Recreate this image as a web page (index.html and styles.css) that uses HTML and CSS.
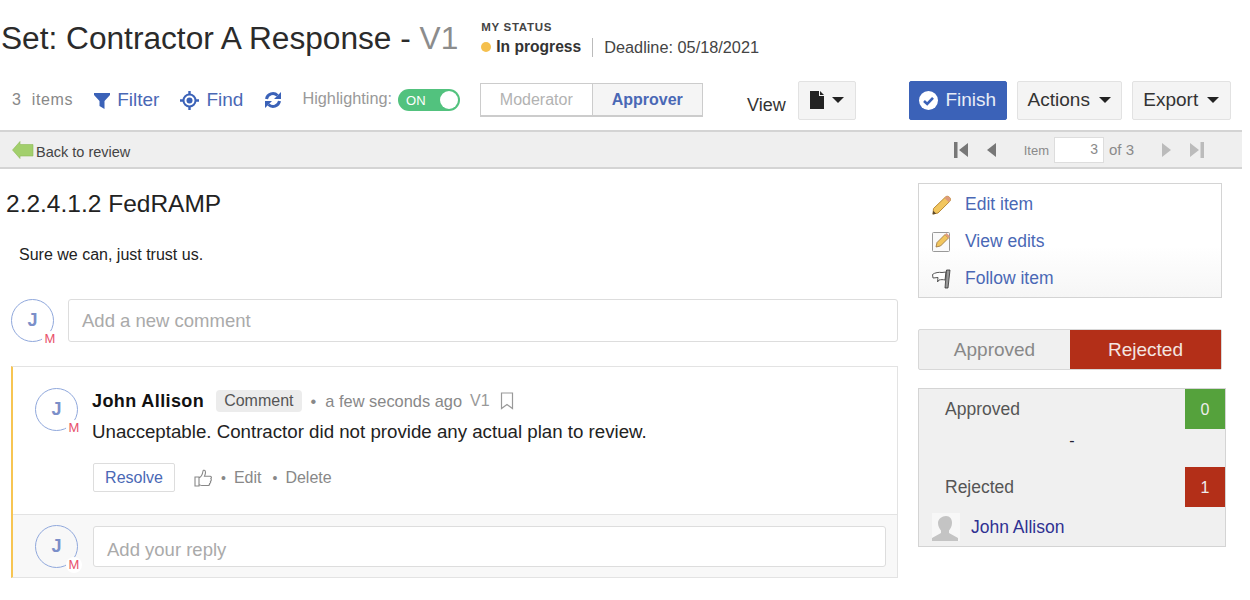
FILE: index.html
```html
<!DOCTYPE html>
<html lang="en">
<head>
<meta charset="utf-8">
<title>Set: Contractor A Response</title>
<link rel="stylesheet" href="styles.css">
</head>
<body>
<div class="page">
  <header class="head">
    <h1 class="title">Set: Contractor A Response - <span class="ver">V1</span></h1>
    <div class="status">
      <div class="status-label">MY STATUS</div>
      <div class="status-row">
        <span class="dot"></span><b class="prog">In progress</b><span class="deadline">Deadline: 05/18/2021</span>
      </div>
    </div>
  </header>
  <div class="toolbar">
    <span class="count">3&nbsp; items</span>
    <a class="tool tool-filter"><svg width="16" height="18" viewBox="0 0 16 18"><path fill="#3b62b8" d="M0 2h16v2L10.500 10V18L5.500 15v-5L0 4z"/></svg>Filter</a>
    <a class="tool tool-find"><svg width="19" height="19" viewBox="0 0 19 19"><circle cx="9.500" cy="9.500" r="6" fill="none" stroke="#3b62b8" stroke-width="2"/><circle cx="9.500" cy="9.500" r="3" fill="#3b62b8"/><path fill="#3b62b8" d="M8.300 0h2.400v4H8.300zM8.300 15h2.400v4H8.300zM0 8.300h4v2.400H0zM15 8.300h4v2.400h-4z"/></svg>Find</a>
    <a class="tool tool-sync"><svg width="18" height="18" viewBox="0 0 18 18"><path fill="none" stroke="#3b62b8" stroke-width="3" d="M2.500 8a6.500 6.500 0 0 1 11-3.500M15.500 10a6.500 6.500 0 0 1-11 3.500"/><path fill="#3b62b8" d="M17 1v7h-7zM1 17v-7h7z"/></svg></a>
    <span class="hl-label">Highlighting:</span>
    <span class="switch"><span class="switch-text">ON</span><span class="knob"></span></span>
    <div class="roles"><span class="role">Moderator</span><span class="role role-on">Approver</span></div>
    <span class="view-label">View</span>
    <button class="btn btn-view"><svg width="15" height="18" viewBox="0 0 15 18"><path fill="#222" d="M0 0h9v5h5v13H0zM10 0l4 4h-4z"/></svg><i class="caret"></i></button>
    <button class="btn btn-finish"><svg width="19" height="19" viewBox="0 0 19 19"><circle cx="9.500" cy="9.500" r="9.500" fill="#fff"/><path fill="none" stroke="#3b62b8" stroke-width="2.600" d="M5 10l3.200 3L14 6.800"/></svg>Finish</button>
    <button class="btn btn-act">Actions<i class="caret"></i></button>
    <button class="btn btn-exp">Export<i class="caret"></i></button>
  </div>
  <nav class="backbar">
    <a class="back"><svg width="23" height="18" viewBox="0 0 23 18"><path fill="#a2cf6c" stroke="#8dbb57" stroke-width=".6" d="M.5 9L8 .5V3.500h13V15H8v2.500z"/></svg>Back to review</a>
    <div class="pager">
      <svg class="pg pg1" width="14" height="16" viewBox="0 0 14 16"><path fill="#777" d="M0 0h3.500v16H0zM14 1v14L5 8z"/></svg>
      <svg class="pg pg2" width="9" height="16" viewBox="0 0 9 16"><path fill="#777" d="M9 1v14L0 8z"/></svg>
      <span class="pg-item">Item</span>
      <span class="pg-input">3</span>
      <span class="pg-of">of 3</span>
      <svg class="pg pg3" width="9" height="16" viewBox="0 0 9 16"><path fill="#bbb" d="M0 1v14l9-7z"/></svg>
      <svg class="pg pg4" width="14" height="16" viewBox="0 0 14 16"><path fill="#bbb" d="M14 0h-3.500v16H14zM0 1v14l9-7z"/></svg>
    </div>
  </nav>
  <div class="main">
    <section class="left">
      <h2 class="item-title">2.2.4.1.2 FedRAMP</h2>
      <p class="answer">Sure we can, just trust us.</p>
      <div class="new-comment">
        <div class="avatar"><span>J</span><em>M</em></div>
        <div class="field field-new">Add a new comment</div>
      </div>
      <article class="comment">
        <div class="comment-body">
          <div class="avatar"><span>J</span><em>M</em></div>
          <div class="comment-main">
            <div class="meta">
              <b class="author">John Allison</b>
              <span class="tag">Comment</span>
              <span class="time">•&nbsp; a few seconds ago</span>
              <span class="cver">V1</span>
              <svg width="14" height="18" viewBox="0 0 14 18"><path fill="none" stroke="#999" stroke-width="1.200" d="M1.500 1h11v15.500L7 12.500l-5.500 4z"/></svg>
            </div>
            <p class="text">Unacceptable. Contractor did not provide any actual plan to review.</p>
            <div class="actions">
              <a class="resolve">Resolve</a>
              <svg class="thumb" width="18" height="18" viewBox="0 0 18 18"><path fill="none" stroke="#888" stroke-width="1.100" d="M1 8h4v9H1zM5 9c2 -1 3.500 -3.500 4 -7 .2 -1.200 2.500 -1 2.500 1.200 0 1.500 -.5 3 -1 4h5.500c1.500 0 1.800 1.800 .8 2.500 .8 .8 .6 2 -.4 2.500 .5 1 .2 2 -.8 2.300 .2 1 -.3 2 -1.600 2H8c-1.500 0 -2 -.6 -3 -1"/></svg>
              <span class="sep">•</span><a class="act">Edit</a><span class="sep">•</span><a class="act">Delete</a>
            </div>
          </div>
        </div>
        <div class="reply">
          <div class="avatar"><span>J</span><em>M</em></div>
          <div class="field field-reply">Add your reply</div>
        </div>
      </article>
    </section>
    <aside class="side">
      <div class="links">
        <a class="link"><svg width="22" height="20" viewBox="0 0 22 20"><path fill="#f2c65e" stroke="#b98a36" d="M2.500 13.500L14.500 2c1-1 2.700-1 4 .3s1.300 3 .3 4L7 18l-5 1z"/><path fill="#de9a7c" d="M14.500 2c1-1 2.700-1 4 .3s1.300 3 .3 4l-1 1-4.300-4.300z"/><path fill="#5b4a2f" d="M1.500 19.500l.8-3.700 2.900 2.900z"/></svg>Edit item</a>
        <a class="link"><svg width="22" height="20" viewBox="0 0 22 20"><rect x="1.500" y=".5" width="17" height="19" rx="1" fill="#fafafa" stroke="#999"/><path fill="#f2c65e" stroke="#96703a" stroke-width=".8" d="M5 15l1-4.500 8-8 3.500 3.500-8 8z"/><path fill="#de9a7c" d="M14 2.500L15.500 1 19 4.500 17.500 6z"/></svg>View edits</a>
        <a class="link"><svg width="22" height="20" viewBox="0 0 22 20"><path fill="#fff" stroke="#555" d="M1.500 5.500C4 3.500 8 3 11 3.500l4-.5-1 8c-2-.5-4-.5-6 0l-1.500 2 .5-4.500-5 .5z"/><path fill="#999" stroke="#333" stroke-width=".8" d="M15.500 1h3.500L17 19h-3z"/></svg>Follow item</a>
      </div>
      <div class="decide"><span class="d-app">Approved</span><span class="d-rej">Rejected</span></div>
      <div class="tally">
        <div class="t-row"><span>Approved</span><b class="t-num t-green">0</b></div>
        <div class="t-empty">-</div>
        <div class="t-row"><span>Rejected</span><b class="t-num t-red">1</b></div>
        <div class="t-user"><svg width="28" height="28" viewBox="0 0 28 28"><rect width="28" height="28" fill="#f7f7f7"/><path fill="#c4c4c4" d="M14 3c4 0 6 3 6 7 0 3-1.500 6-3 7.500V20l9 5v3H0v-3l9-5v-2.500C7.500 16 6 13 6 10c0-4 4-7 8-7z"/></svg><a>John Allison</a></div>
      </div>
    </aside>
  </div>
</div>
</body>
</html>
```
FILE: styles.css
```css
* { box-sizing: border-box; }
html, body { margin: 0; padding: 0; background: #fff; }
body { font-family: "Liberation Sans", Arial, sans-serif; color: #222; }
.page { width: 1242px; height: 600px; overflow: hidden; }

.head { display: flex; align-items: flex-start; height: 80px; padding-left: 1px; }
.title { margin: 19px 0 0; font-size: 31.650px; line-height: 38px; font-weight: 400; color: #2b2b2b; }
.ver { color: #8c8c8c; }
.status { margin: 20px 0 0 23px; }
.status-label { font-size: 11.500px; line-height: 14px; font-weight: 700; color: #444; letter-spacing: .7px; }
.status-row { display: flex; align-items: center; margin-top: 3px; height: 20px; }
.dot { width: 10px; height: 10px; border-radius: 50%; background: #f5c04e; margin-right: 5px; }
.prog { font-size: 15.600px; color: #333; }
.deadline { font-size: 16.300px; color: #444; border-left: 1px solid #bbb; margin-left: 11px; padding-left: 11px; line-height: 19px; }

.toolbar { display: flex; align-items: center; height: 50px; padding-left: 12px; padding-bottom: 10px; }
.count { font-size: 16px; color: #888; margin-right: 21px; letter-spacing: .65px; }
.tool { display: inline-flex; align-items: center; font-size: 19px; color: #4a68b5; }
.tool-filter svg { margin-right: 7px; }
.tool-filter { margin-right: 21px; }
.tool-find svg { margin-right: 7px; }
.tool-find { margin-right: 21px; }
.tool-sync { margin-right: 20px; }
.hl-label { font-size: 16.300px; color: #999; margin-right: 6px; margin-top: -4px; }
.switch { position: relative; width: 62px; height: 22px; border-radius: 11px; background: #52c27e; display: inline-block; }
.switch-text { position: absolute; left: 8px; top: 4px; font-size: 13px; line-height: 15px; font-weight: 400; color: #fff; }
.knob { position: absolute; right: 2px; top: 2px; width: 18px; height: 18px; border-radius: 50%; background: #fff; }
.roles { display: flex; margin-left: 20px; border: 1px solid #ccc; border-bottom-width: 2px; height: 34px; }
.role { width: 110.500px; font-size: 16px; line-height: 31px; text-align: center; color: #b2b2b2; }
.role-on { background: #f5f5f5; color: #4a68b5; font-weight: 700; border-left: 1px solid #ccc; }
.view-label { font-size: 18px; color: #333; margin-left: 44px; margin-right: 12px; margin-top: 11px; }
.btn { display: inline-flex; align-items: center; justify-content: center; height: 39px; border: 1px solid #e2e2e2; border-radius: 2px; background: #f4f4f4; font: 400 19px "Liberation Sans", Arial, sans-serif; color: #333; padding: 0; }
.caret { display: inline-block; border-left: 6.500px solid transparent; border-right: 6.500px solid transparent; border-top: 6.500px solid #222; }
.btn-view { width: 58px; gap: 7px; margin-right: 53px; }
.btn-finish { width: 98px; background: #3b62b8; border-color: #3b62b8; color: #e8edf7; gap: 7px; margin-right: 10px; }
.btn-act { width: 105px; gap: 9px; margin-right: 10px; }
.btn-exp { width: 99px; gap: 9px; }

.backbar { display: flex; justify-content: space-between; align-items: center; height: 39px; background: #efefef; border-top: 2px solid #d4d4d4; border-bottom: 2px solid #d4d4d4; padding-left: 12px; }
.back { display: inline-flex; align-items: center; font-size: 14.500px; color: #444; padding-top: 4px; }
.back svg { margin-top: -4px; margin-right: 1px; }
.pager { display: flex; align-items: center; font-size: 14px; color: #8a8a8a; padding-right: 38px; }
.pg1 { margin-right: 19px; }
.pg2 { margin-right: 28px; }
.pg-item { margin-right: 5px; margin-top: 2px; font-size: 13px; }
.pg-input { width: 50px; height: 26px; background: #fff; border: 1px solid #ddd; text-align: right; padding-right: 5px; font-size: 14px; line-height: 22px; }
.pg-of { margin-left: 5px; margin-right: 28px; font-size: 15px; }
.pg3 { margin-right: 19px; }

.main { display: flex; align-items: flex-start; }
.left { width: 887px; margin-left: 11px; margin-right: 20px; }
.item-title { margin: 21px 0 0 -5px; font-size: 24.500px; line-height: 28px; font-weight: 400; color: #222; }
.answer { margin: 27px 0 0 8px; font-size: 16px; line-height: 20px; color: #222; }
.new-comment { display: flex; align-items: center; margin-top: 34px; gap: 14px; }
.avatar { position: relative; flex: none; width: 43px; height: 43px; border: 1px solid #90a8dc; border-radius: 50%; text-align: center; }
.avatar span { font-size: 18px; line-height: 41px; font-weight: 700; color: #7b8fc9; }
.avatar em { position: absolute; right: -5px; bottom: -6px; width: 16px; height: 16px; font-style: normal; font-size: 13px; line-height: 16px; color: #e8506a; background: #fff; border-radius: 50%; text-align: center; }
.field { flex: 1; border: 1px solid #ddd; border-radius: 3px; background: #fff; color: #aaa; font-size: 18.500px; }
.field-new { height: 43px; line-height: 41px; padding-left: 13px; }
.comment { margin-top: 24px; border: 1px solid #e3e3e3; border-left: 2px solid #f7c552; }
.comment-body { display: flex; padding: 21px 0 0 22px; height: 147px; }
.comment-main { margin-left: 14px; flex: 1; }
.meta { display: flex; align-items: center; height: 24px; margin-top: 1px; }
.author { font-size: 18px; color: #111; letter-spacing: .4px; }
.tag { margin-left: 12px; background: #ececec; border-radius: 4px; padding: 0 8px; height: 22px; line-height: 22px; font-size: 16px; color: #555; }
.time { margin-left: 9px; font-size: 16.400px; color: #888; }
.cver { margin-left: 8px; font-size: 16px; color: #999; }
.meta svg { margin-left: 10px; }
.text { margin: 8px 0 0; font-size: 18.700px; line-height: 22px; color: #222; }
.actions { display: flex; align-items: center; margin-top: 20px; margin-left: 1px; font-size: 16px; color: #888; }
.resolve { width: 82px; height: 29px; border: 1px solid #ddd; border-radius: 2px; text-align: center; line-height: 27px; color: #4a68b5; }
.thumb { margin-left: 19px; margin-right: 9px; }
.sep { margin: 0 8px 0 0; font-size: 14px; }
.act { margin-right: 11px; color: #888; }
.reply { display: flex; align-items: center; gap: 15px; height: 63px; padding-left: 22px; padding-right: 11px; background: #f8f8f8; border-top: 1px solid #e3e3e3; }
.field-reply { height: 41px; line-height: 45px; padding-left: 13px; }

.side { width: 308px; margin-top: 14px; }
.links { width: 304px; height: 115px; border: 1px solid #d4d4d4; background: linear-gradient(#fff 55%, #f6f6f6); padding: 2px 0 0 12px; }
.link { display: flex; align-items: center; height: 37px; font-size: 17.500px; color: #4a68b5; }
.link svg { margin-right: 12px; flex: none; }
.decide { display: flex; width: 304px; height: 41px; margin-top: 31px; border: 1px solid #d8d8d8; border-radius: 2px; background: #f0f0f0; font-size: 19px; line-height: 39px; text-align: center; }
.d-app { width: 151px; color: #888; }
.d-rej { flex: 1; background: #b32f18; color: #f3e5e1; }
.tally { width: 308px; margin-top: 18px; border: 1px solid #d4d4d4; background: #f0f0f0; height: 159px; }
.t-row { display: flex; justify-content: space-between; height: 40px; line-height: 41px; padding-left: 26px; font-size: 17.500px; color: #555; }
.t-num { width: 40px; text-align: center; color: #eee; font-weight: 400; font-size: 16px; }
.t-green { background: #55a23c; }
.t-red { background: #b32f18; }
.t-empty { height: 38px; line-height: 24px; text-align: center; font-size: 16px; color: #223; }
.t-user { display: flex; align-items: center; padding-left: 13px; height: 40px; font-size: 17.500px; }
.t-user svg { margin-right: 11px; }
.t-user a { color: #2f3192; }
```
